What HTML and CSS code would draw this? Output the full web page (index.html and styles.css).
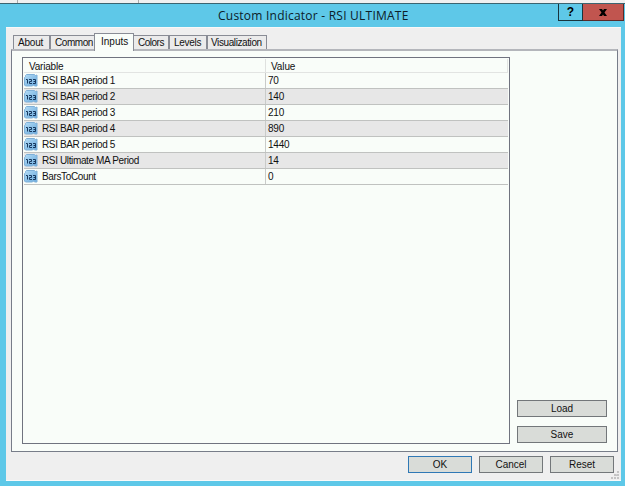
FILE: index.html
```html
<!DOCTYPE html>
<html>
<head>
	<title>Custom Indicator - RSI ULTIMATE</title>
	<meta charset="UTF-8">
	<link rel="stylesheet" href="styles.css">
</head>
<body>
	<svg class="defs" width="0" height="0">
		<defs>
			<linearGradient id="blue" x1="0" y1="0" x2="1" y2="1">
				<stop offset="0" stop-color="#b4dcf6" />
				<stop offset="1" stop-color="#68a9dc" />
			</linearGradient>
		</defs>
		<symbol id="num" viewBox="0 0 14 13">
			<path d="M1.500 1.500l1-1h8l1 1 1.500-.5v11h-2.500l-1-1-1 1h-7l-1-1v-7.500l1-1z" fill="url(#blue)" stroke="#7fb0d8" />
			<path d="M2 5.500h1.500v4M5 5.500h2.500v2h-2v2h2.500M9 5.500h2.500v4H9M9.500 7.500h2" fill="none" stroke="#17395f" />
		</symbol>
	</svg>
	<div class="behind"><i></i><i></i></div>
	<div class="window">
		<div class="titlebar">
			<div class="title">Custom Indicator - RSI ULTIMATE</div>
			<div class="help">?</div>
			<div class="close">
				<svg width="8" height="7" viewBox="0 0 8 7"><path d="M0 0h3l1 1.500L5 0h3L5.500 3.500 8 7H5L4 5.500 3 7H0l2.500-3.500z" /></svg>
			</div>
		</div>
		<div class="client">
			<div class="tabs">
				<div class="tab about"><span>About</span></div>
				<div class="tab common"><span>Common</span></div>
				<div class="tab inputs active"><span>Inputs</span></div>
				<div class="tab colors"><span>Colors</span></div>
				<div class="tab levels"><span>Levels</span></div>
				<div class="tab visual"><span>Visualization</span></div>
			</div>
			<div class="panel">
				<div class="list">
					<div class="head"><div class="name">Variable</div><div class="value">Value</div></div>
					<div class="row"><div class="name"><svg><use href="#num" /></svg><span>RSI BAR period 1</span></div><div class="value">70</div></div>
					<div class="row"><div class="name"><svg><use href="#num" /></svg><span>RSI BAR period 2</span></div><div class="value">140</div></div>
					<div class="row"><div class="name"><svg><use href="#num" /></svg><span>RSI BAR period 3</span></div><div class="value">210</div></div>
					<div class="row"><div class="name"><svg><use href="#num" /></svg><span>RSI BAR period 4</span></div><div class="value">890</div></div>
					<div class="row"><div class="name"><svg><use href="#num" /></svg><span>RSI BAR period 5</span></div><div class="value">1440</div></div>
					<div class="row"><div class="name"><svg><use href="#num" /></svg><span>RSI Ultimate MA Period</span></div><div class="value">14</div></div>
					<div class="row"><div class="name"><svg><use href="#num" /></svg><span>BarsToCount</span></div><div class="value">0</div></div>
				</div>
				<div class="side">
					<div class="button">Load</div>
					<div class="button">Save</div>
				</div>
			</div>
			<div class="footer">
				<div class="button default">OK</div>
				<div class="button">Cancel</div>
				<div class="button">Reset</div>
			</div>
			<svg class="grip" width="8" height="8" fill="#c4c4c4"><path d="M6 0h2v2H6zM3 3h2v2H3zM6 3h2v2H3zM0 6h2v2H0zM3 6h2v2H3zM6 6h2v2H6z" /></svg>
		</div>
	</div>
</body>
</html>
```
FILE: styles.css
```css
* {
	box-sizing: border-box;
}

body {
	margin: 0;
	width: 625px;
	height: 486px;
	overflow: hidden;
	display: flex;
	flex-direction: column;
	background-color: #5ec8e8;
	font-family: "Liberation Sans", Arial, sans-serif;
	font-size: 10px;
	line-height: 12px;
	color: #111;
	white-space: nowrap;
}

.defs {
	position: absolute;
}

.behind {
	height: 3px;
	background-color: #f0f0f0;
	display: flex;
}

.behind i {
	width: 18px;
	border-right: 1px solid #aaa;
}

.behind i + i {
	width: 121px;
}

.window {
	flex: 1;
	display: flex;
	flex-direction: column;
	padding: 0 4px 5px 6px;
	border-top: 1px solid #3b6470;
}

.titlebar {
	height: 23px;
	margin-right: -3px;
	display: flex;
	align-items: flex-start;
}

.title {
	flex: 1;
	padding-left: 212px;
	font-family: "Open Sans", "Noto Sans", sans-serif;
	font-size: 12px;
	line-height: 24px;
	letter-spacing: .23px;
	color: #0c2029;
}

.help, .close {
	height: 17px;
	border: 1px solid #18343d;
	border-top: none;
	display: flex;
	align-items: center;
	justify-content: center;
}

.help {
	width: 25px;
	font-size: 12px;
	font-weight: bold;
	color: #000;
}

.close {
	width: 41px;
	border-left: none;
	border-color: #5b2927;
	background-color: #c1554f;
}

.client {
	flex: 1;
	position: relative;
	display: flex;
	flex-direction: column;
	padding: 5px 3px 0 5px;
	background-color: #efefef;
	border-top: 1px solid #f8f8f8;
	border-bottom: 1px solid #fafafa;
}

.tabs {
	height: 16px;
	padding-left: 2px;
	display: flex;
	align-items: flex-end;
}

.tab {
	height: 14px;
	padding: 1px 0 0 4px;
	border: 1px solid #898c95;
	border-bottom: none;
	background-color: #ebebeb;
}

.tab span {
	display: block;
}

.about {
	width: 37px;
	letter-spacing: -.2px;
}

.common {
	width: 44px;
	border-right: none;
	letter-spacing: -.45px;
}

.inputs {
	width: 40px;
}

.colors {
	width: 35px;
	border-left: none;
	letter-spacing: -.5px;
}

.levels {
	width: 38px;
	letter-spacing: -.3px;
}

.visual {
	width: 60px;
	padding-left: 3px;
	letter-spacing: -.4px;
}

.active {
	height: 18px;
	padding: 2px 0 0 6px;
	margin-bottom: -2px;
	position: relative;
	background-color: #f9fdf9;
}

.panel {
	height: 403px;
	padding: 6px 9px 8px 10px;
	display: flex;
	gap: 7px;
	border: 1px solid #777d89;
	border-top: 2px solid #b4b6bb;
	background-color: #f9fdf9;
}

.list {
	width: 488px;
	height: 387px;
	padding: 1px 1px 0;
	border: 1px solid #70737f;
}

.head, .row {
	display: flex;
}

.head {
	height: 14px;
	border-bottom: 1px solid #e2e4e2;
	border-right: 1px solid #e2e4e2;
}

.head .name {
	padding: 2px 0 0 5px;
	letter-spacing: -.2px;
	border-color: #dfe1df;
}

.head .value {
	padding: 2px 0 0 5px;
	letter-spacing: -.1px;
}

.row {
	height: 16px;
	border-bottom: 1px solid #c0c2c0;
}

.row:nth-child(odd) {
	background-color: #e7e7e7;
}

.name {
	width: 242px;
	display: flex;
	border-right: 1px solid #c9cbc9;
}

.name svg {
	width: 14px;
	height: 13px;
	margin: 1px 4px 0 0;
}

.name span {
	padding-top: 2px;
	letter-spacing: -.37px;
}

.row .value {
	padding: 2px 0 0 2px;
	letter-spacing: -.2px;
}

.side {
	width: 90px;
	display: flex;
	flex-direction: column;
	justify-content: flex-end;
	gap: 9px;
}

.button {
	height: 17px;
	border: 1px solid #73777a;
	background-color: #d9dcd8;
	line-height: 16px;
	text-align: center;
}

.footer {
	padding: 4px 4px 0 0;
	display: flex;
	justify-content: flex-end;
	gap: 7px;
}

.footer .button {
	width: 64px;
}

.footer .default {
	border-color: #2f78b5;
}

.grip {
	position: absolute;
	right: 2px;
	bottom: 1px;
}
```
